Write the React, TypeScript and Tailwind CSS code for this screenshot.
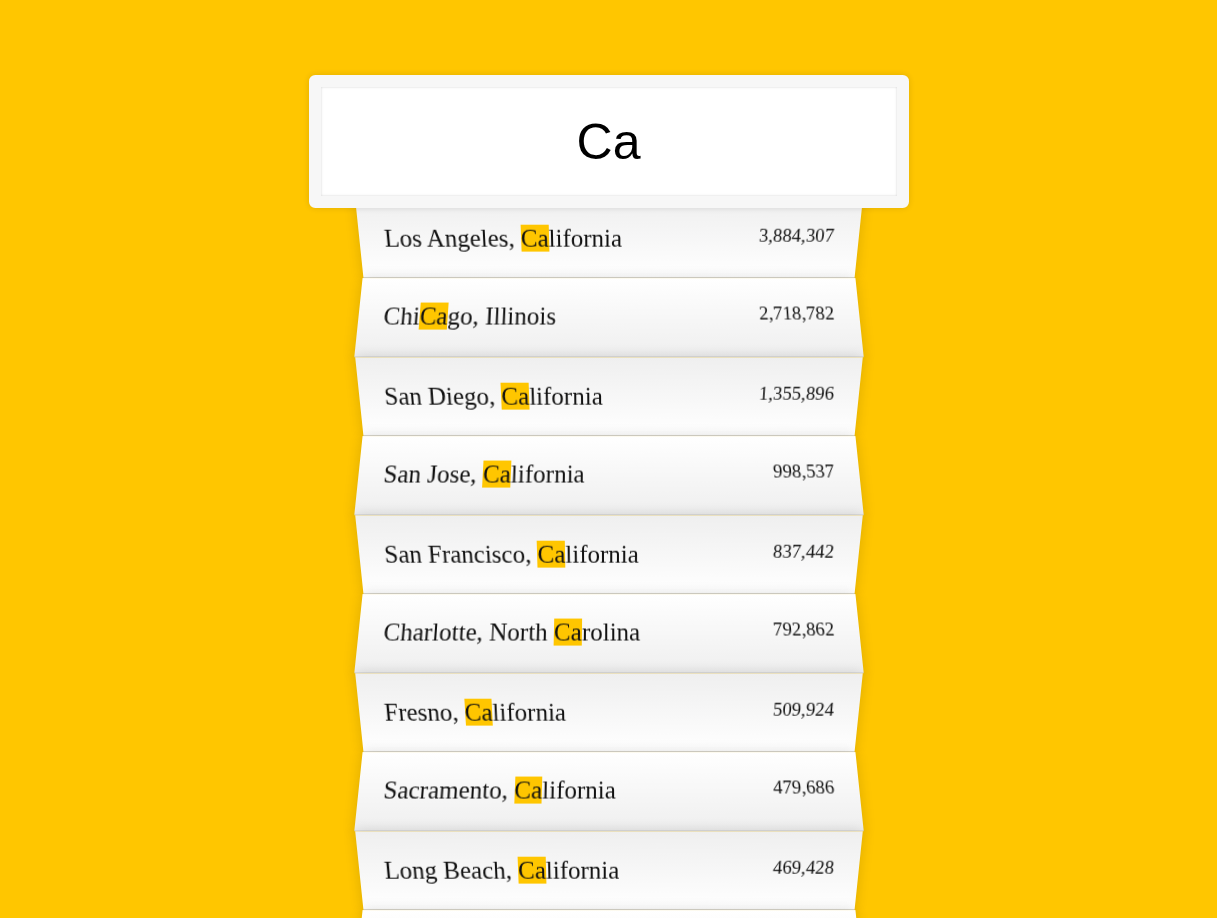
import { Fragment } from 'react';

type City = {
  city: string;
  state: string;
  population: string;
};

const query = 'Ca';

const cities: City[] = [
  { city: 'Los Angeles', state: 'California', population: '3,884,307' },
  { city: 'Chicago', state: 'Illinois', population: '2,718,782' },
  { city: 'San Diego', state: 'California', population: '1,355,896' },
  { city: 'San Jose', state: 'California', population: '998,537' },
  { city: 'San Francisco', state: 'California', population: '837,442' },
  { city: 'Charlotte', state: 'North Carolina', population: '792,862' },
  { city: 'Fresno', state: 'California', population: '509,924' },
  { city: 'Sacramento', state: 'California', population: '479,686' },
  { city: 'Long Beach', state: 'California', population: '469,428' },
  { city: 'Oakland', state: 'California', population: '406,253' },
];

// every "ca" (any case) is swapped for a highlighted copy of the query
function highlight(text: string) {
  const parts = text.split(new RegExp(query, 'gi'));
  return parts.map((part, i) => (
    <Fragment key={i}>
      {part}
      {i < parts.length - 1 && <span className="bg-[#ffc600]">{query}</span>}
    </Fragment>
  ));
}

export default function App() {
  return (
    <div className="min-h-screen overflow-hidden bg-[#ffc600] pt-[62.5px] font-['Liberation_Serif',serif] text-[#111]">
      <form className="mx-auto max-w-[500px]">
        <input
          type="text"
          value={query}
          readOnly
          className="relative -left-[10%] top-[12.5px] z-[2] block h-[133px] w-[120%] rounded-[6.25px] border-[12.5px] border-[#f7f7f7] bg-white text-center font-['Liberation_Sans',sans-serif] text-[50px] text-black shadow-[0_0_6.25px_rgba(0,0,0,0.12),inset_0_0_2.5px_rgba(0,0,0,0.19)] outline-none"
        />
        <ul className="relative m-0 p-0">
          {cities.map((c, i) => {
            const odd = i % 2 === 0;
            return (
              <li
                key={c.city}
                className={
                  odd
                    ? 'flex list-none justify-between border-b-[1.5px] border-[#d8d8d8] bg-linear-to-t from-white to-[#efefef] p-[25px] text-[25px] leading-[normal] shadow-[0_0_12.5px_rgba(0,0,0,0.14)] [transform:perspective(125px)_rotateX(-3deg)_translateY(3.75px)]'
                    : 'flex list-none justify-between border-b-[1.5px] border-[#d8d8d8] bg-linear-to-b from-white to-[#efefef] p-[25px] text-[25px] leading-[normal] shadow-[0_0_12.5px_rgba(0,0,0,0.14)] [transform:perspective(125px)_rotateX(3deg)_translateY(2.5px)_scale(1.001)]'
                }
              >
                <span>{highlight(`${c.city}, ${c.state}`)}</span>
                <span className="text-[18.75px]">{c.population}</span>
              </li>
            );
          })}
        </ul>
      </form>
    </div>
  );
}
